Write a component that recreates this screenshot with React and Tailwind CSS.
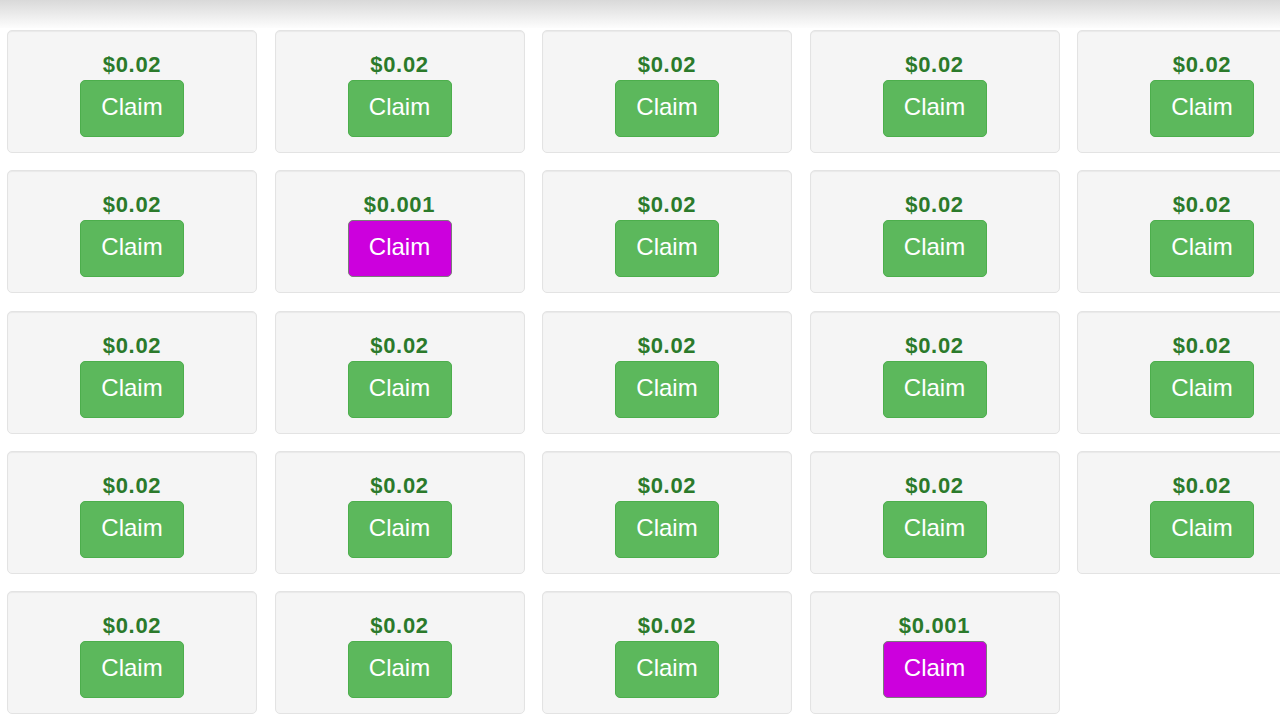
import React from "react";

const rows = [
  ["$0.02", "$0.02", "$0.02", "$0.02", "$0.02"],
  ["$0.02", "$0.001", "$0.02", "$0.02", "$0.02"],
  ["$0.02", "$0.02", "$0.02", "$0.02", "$0.02"],
  ["$0.02", "$0.02", "$0.02", "$0.02", "$0.02"],
  ["$0.02", "$0.02", "$0.02", "$0.001"],
];

const ClaimCard = ({ amount }) => {
  const bonus = amount === "$0.001";
  return (
    <div className="h-[123px] w-[250px] flex flex-col items-center pt-[22px] bg-[#f5f5f5] border border-[#e3e3e3] rounded-[5px] shadow-[inset_0_1px_1px_rgba(0,0,0,0.05)]">
      <div className="text-[22px] leading-[24px] font-bold text-[#2b7a2b] tracking-[0.7px]">{amount}</div>
      <button
        className={
          bonus
            ? "mt-[3px] w-[104px] h-[57px] pb-[3px] rounded-[5px] bg-[#cc00dd] border border-[#7a7a7a] text-white text-[24px]"
            : "mt-[3px] w-[104px] h-[57px] pb-[3px] rounded-[5px] bg-[#5cb85c] border border-[#4cae4c] text-white text-[24px]"
        }
      >
        Claim
      </button>
    </div>
  );
};

export default function App() {
  return (
    <div className="w-[1280px] h-[720px] overflow-hidden bg-white font-['Liberation_Sans',Arial,sans-serif]">
      {/* top bar */}
      <div className="h-[28px] bg-gradient-to-b from-[#d9d9d9] to-[#fdfdfd]" />

      <div className="pl-[7px] pt-[2px] flex flex-col gap-[17.3px]">
        {rows.map((row, i) => (
          <div key={i} className="flex gap-[17.5px]">
            {row.map((amount, j) => (
              <div key={j} className="shrink-0">
                <ClaimCard amount={amount} />
              </div>
            ))}
          </div>
        ))}
      </div>
    </div>
  );
}
